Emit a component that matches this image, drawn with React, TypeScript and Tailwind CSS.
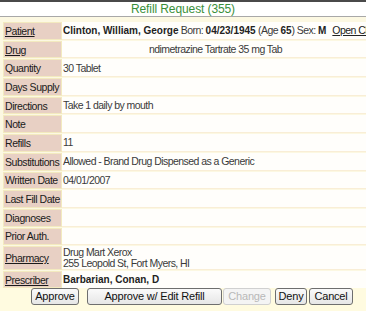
import React from "react";

const rows: { label: string; link?: boolean; value?: React.ReactNode }[] = [
  { label: "Patient", link: true },
  { label: "Drug", link: true },
  { label: "Quantity", value: "30 Tablet" },
  { label: "Days Supply", value: "" },
  { label: "Directions", value: "Take 1 daily by mouth" },
  { label: "Note", value: "" },
  { label: "Refills", value: "11" },
  { label: "Substitutions", value: "Allowed - Brand Drug Dispensed as a Generic" },
  { label: "Written Date", value: "04/01/2007" },
  { label: "Last Fill Date", value: "" },
  { label: "Diagnoses", value: "" },
  { label: "Prior Auth.", value: "" },
];

function Label({ text, link }: { text: string; link?: boolean }) {
  return (
    <div className="ml-[3px] w-[59px] shrink-0 bg-[#e8d0c4] border border-[#f3eabf] pl-[1px] flex items-center whitespace-nowrap text-[10.5px] tracking-[-0.45px] text-[#1a1a1a]">
      <span className={link ? "underline" : ""}>{text}</span>
    </div>
  );
}

export default function App() {
  return (
    <div className="w-[366px] h-[311px] overflow-hidden bg-[#fcf8e2] font-['Liberation_Sans',Arial,sans-serif] text-[10px] leading-[12px]">
      <div className="border-t-2 border-[#4a4a4a] bg-white h-[17px] border-b border-b-[#a8a8a8] flex items-center justify-center">
        <span className="text-[12px] text-[#3a8f3a] tracking-[-0.1px]">Refill Request (355)</span>
      </div>
      <div className="mt-[5px] flex flex-col gap-[1px]">
        {rows.map((r, i) => (
          <div key={i} className="flex h-[17.7px]">
            <Label text={r.label} link={r.link} />
            <div className="flex-1 min-w-0 overflow-hidden bg-[#fffefb] border-b border-[#f9eed6] flex items-center pl-[1px] whitespace-nowrap text-[#3a3a3a] text-[10.5px] tracking-[-0.55px]">
              {i === 0 ? (
                <span>
                  <b className="text-[10px] tracking-normal text-[#222]">Clinton, William, George</b> Born:{" "}
                  <b className="text-[10px] tracking-normal text-[#222]">04/23/1945</b> (Age{" "}
                  <b className="text-[10px] tracking-normal text-[#222]">65</b>) Sex:{" "}
                  <b className="text-[10px] tracking-normal text-[#222]">M</b>
                  <span className="ml-[6px] underline text-[#222]">Open Chart</span>
                </span>
              ) : i === 1 ? (
                <span className="pl-[86px]">ndimetrazine Tartrate 35 mg Tab</span>
              ) : (
                <span>{r.value}</span>
              )}
            </div>
          </div>
        ))}
        <div className="flex h-[24px]">
          <Label text="Pharmacy" link />
          <div className="flex-1 bg-[#fffefb] border-b border-[#f9eed6] flex flex-col justify-center pl-[1px] whitespace-nowrap text-[#3a3a3a] text-[10.5px] tracking-[-0.55px] leading-[11px]">
            <span>Drug Mart Xerox</span>
            <span>255 Leopold St, Fort Myers, HI</span>
          </div>
        </div>
        <div className="flex h-[17px]">
          <Label text="Prescriber" link />
          <div className="flex-1 bg-[#fffefb] flex items-center pl-[1px] whitespace-nowrap">
            <b className="text-[#222]">Barbarian, Conan, D</b>
          </div>
        </div>
      </div>
      <div className="flex items-start pl-[31px] bg-[#fffbe0] h-[30px] text-[11px] tracking-[-0.2px]">
        <button className="w-[48px] h-[17px] rounded-[3px] border border-[#6e6e6e] bg-gradient-to-b from-[#fafafa] to-[#e6e6e6] text-[#111] leading-[15px]">Approve</button>
        <button className="ml-[8px] w-[135px] h-[17px] rounded-[3px] border border-[#6e6e6e] bg-gradient-to-b from-[#fafafa] to-[#e6e6e6] text-[#111] leading-[15px]">Approve w/ Edit Refill</button>
        <button className="ml-[1px] w-[48px] h-[17px] rounded-[3px] border border-[#d0d0d0] bg-[#f4f4f4] text-[#b8b8b8] leading-[15px]">Change</button>
        <button className="ml-[4px] w-[32px] h-[17px] rounded-[3px] border border-[#6e6e6e] bg-gradient-to-b from-[#fafafa] to-[#e6e6e6] text-[#111] leading-[15px]">Deny</button>
        <button className="ml-[2px] w-[44px] h-[17px] rounded-[3px] border border-[#6e6e6e] bg-gradient-to-b from-[#fafafa] to-[#e6e6e6] text-[#111] leading-[15px]">Cancel</button>
      </div>
    </div>
  );
}
